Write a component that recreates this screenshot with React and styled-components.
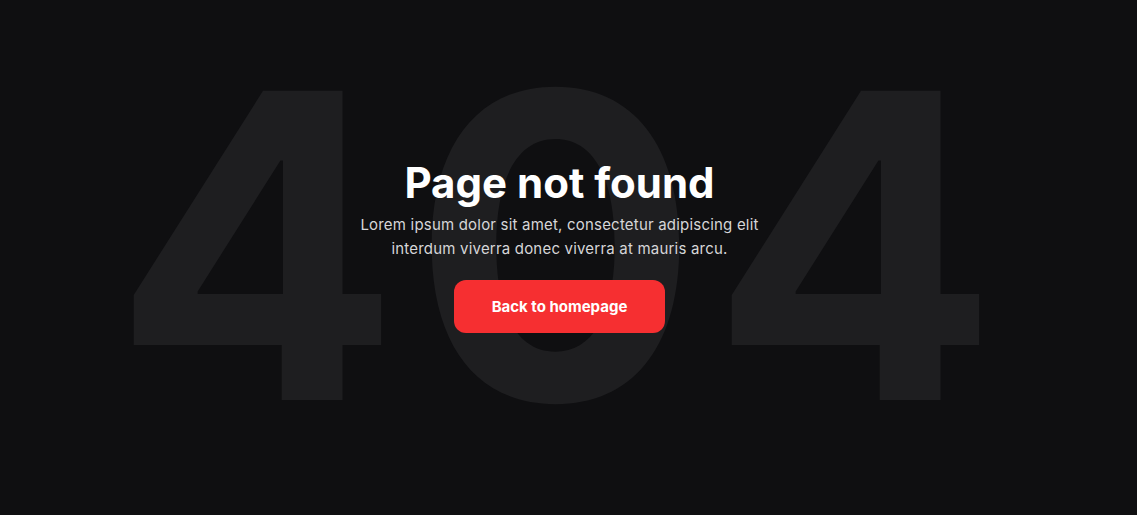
import React from "react"
import styled, { createGlobalStyle } from "styled-components"

const GlobalStyle = createGlobalStyle`
  html, body {
    margin: 0;
    padding: 0;
    background: #0f0f11;
  }
  body {
    font-family: "Inter", "Lato", sans-serif;
  }
`

function App() {
  return (
    <>
      <GlobalStyle />
      <Page>
        <Stage>
          <BigCode aria-hidden="true">404</BigCode>
          <Content>
            <Title>Page not found</Title>
            <Text>
              Lorem ipsum dolor sit amet, consectetur adipiscing elit
              <br />
              interdum viverra donec viverra at mauris arcu.
            </Text>
            <Button>Back to homepage</Button>
          </Content>
        </Stage>
      </Page>
    </>
  )
}

const Page = styled.main`
  height: 515px;
  box-sizing: border-box;
  padding: 0 26px 24px 0;
  display: flex;
  align-items: center;
  justify-content: center;
  overflow: hidden;
  background: #0f0f11;
`
const Stage = styled.div`
  display: grid;
  place-items: center;
`
const BigCode = styled.div`
  grid-area: 1 / 1;
  font-family: "Inter", sans-serif;
  font-weight: 700;
  font-size: 425px;
  line-height: 1;
  letter-spacing: 12px;
  margin-right: -12px;
  color: #1e1e20;
  user-select: none;
`
const Content = styled.div`
  grid-area: 1 / 1;
  display: flex;
  flex-direction: column;
  align-items: center;
  text-align: center;
  padding: 0 0 0 8px;
`
const Title = styled.h1`
  margin: 0;
  font-family: "Inter", sans-serif;
  font-size: 42px;
  font-weight: 700;
  line-height: 48px;
  color: #ffffff;
  letter-spacing: 0;
`
const Text = styled.p`
  margin: 6px 0 0;
  font-size: 15px;
  line-height: 24px;
  letter-spacing: 0.2px;
  color: #d6d6d8;
`
const Button = styled.button`
  margin-top: 19px;
  width: 211px;
  height: 53px;
  border: none;
  border-radius: 12px;
  background: #f62f31;
  color: #ffffff;
  font-family: "Inter", sans-serif;
  font-size: 15px;
  font-weight: 700;
  cursor: pointer;
`

export default App
